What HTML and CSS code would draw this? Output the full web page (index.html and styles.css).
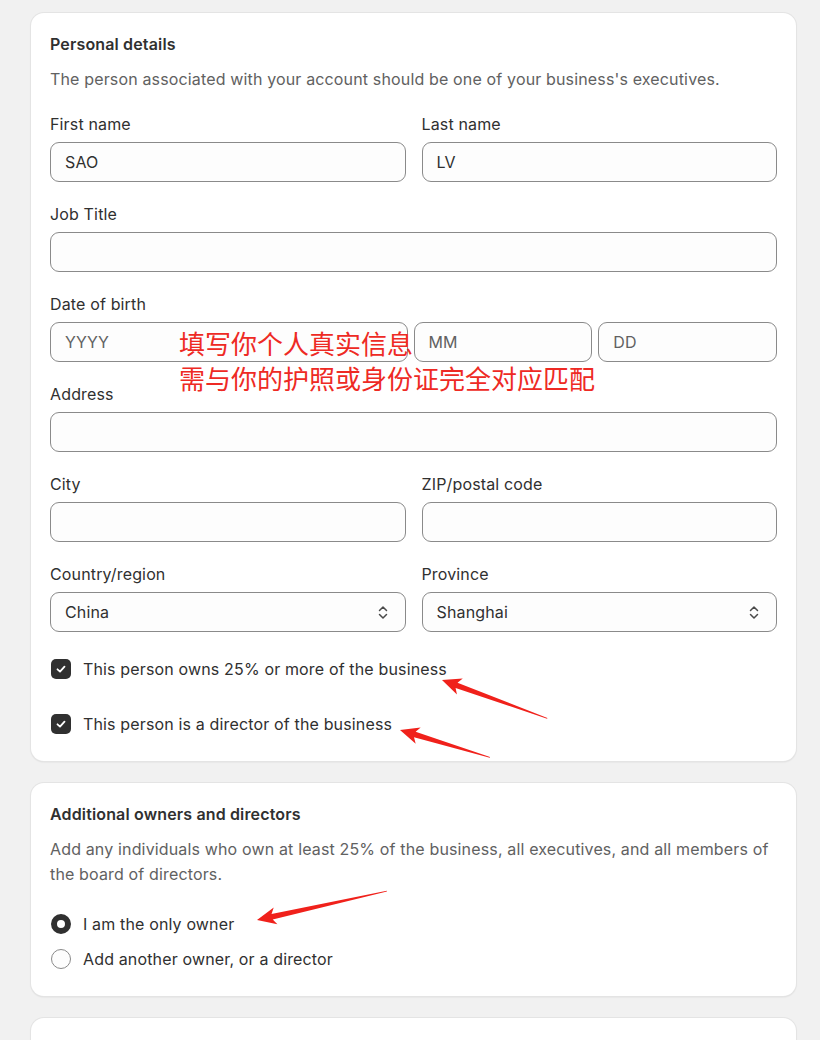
FILE: index.html
```html
<!DOCTYPE html>
<html lang="en">
<head>
<meta charset="utf-8">
<title>Personal details</title>
<link rel="stylesheet" href="styles.css">
</head>
<body>
<main class="page">
  <section class="card">
    <h2 class="card-title">Personal details</h2>
    <p class="card-desc">The person associated with your account should be one of your business's executives.</p>

    <div class="form">
      <div class="row two">
        <div class="field">
          <label class="label">First name</label>
          <div class="input">SAO</div>
        </div>
        <div class="field">
          <label class="label">Last name</label>
          <div class="input">LV</div>
        </div>
      </div>

      <div class="field">
        <label class="label">Job Title</label>
        <div class="input"></div>
      </div>

      <div class="field">
        <label class="label">Date of birth</label>
        <div class="dob">
          <div class="input placeholder">YYYY</div>
          <div class="input placeholder">MM</div>
          <div class="input placeholder">DD</div>
        </div>
      </div>

      <div class="field">
        <label class="label">Address</label>
        <div class="input"></div>
      </div>

      <div class="row two">
        <div class="field">
          <label class="label">City</label>
          <div class="input"></div>
        </div>
        <div class="field">
          <label class="label">ZIP/postal code</label>
          <div class="input"></div>
        </div>
      </div>

      <div class="row two">
        <div class="field">
          <label class="label">Country/region</label>
          <div class="input select"><span>China</span>
            <svg class="chev" width="10" height="15" viewBox="0 0 10 15"><path d="M1.5 5.5 L5 2 L8.5 5.5 M1.5 9.5 L5 13 L8.5 9.5" fill="none" stroke="#4a4a4a" stroke-width="1.5" stroke-linecap="round" stroke-linejoin="round"/></svg>
          </div>
        </div>
        <div class="field">
          <label class="label">Province</label>
          <div class="input select"><span>Shanghai</span>
            <svg class="chev" width="10" height="15" viewBox="0 0 10 15"><path d="M1.5 5.5 L5 2 L8.5 5.5 M1.5 9.5 L5 13 L8.5 9.5" fill="none" stroke="#4a4a4a" stroke-width="1.5" stroke-linecap="round" stroke-linejoin="round"/></svg>
          </div>
        </div>
      </div>
    </div>

    <div class="checks">
      <div class="check-row">
        <span class="checkbox"><svg width="12" height="12" viewBox="0 0 12 12"><path d="M2.5 6.3 L5 8.6 L9.5 3.6" fill="none" stroke="#fff" stroke-width="1.8" stroke-linecap="round" stroke-linejoin="round"/></svg></span>
        <span class="check-text">This person owns 25% or more of the business</span>
      </div>
      <div class="check-row">
        <span class="checkbox"><svg width="12" height="12" viewBox="0 0 12 12"><path d="M2.5 6.3 L5 8.6 L9.5 3.6" fill="none" stroke="#fff" stroke-width="1.8" stroke-linecap="round" stroke-linejoin="round"/></svg></span>
        <span class="check-text">This person is a director of the business</span>
      </div>
    </div>
  </section>

  <section class="card">
    <h2 class="card-title">Additional owners and directors</h2>
    <p class="card-desc">Add any individuals who own at least 25% of the business, all executives, and all members of the board of directors.</p>
    <div class="radios">
      <div class="radio-row"><span class="radio on"></span><span class="check-text">I am the only owner</span></div>
      <div class="radio-row"><span class="radio"></span><span class="check-text">Add another owner, or a director</span></div>
    </div>
  </section>

  <section class="card card-stub"></section>
</main>

<div class="annotation">
  <p>填写你个人真实信息</p>
  <p>需与你的护照或身份证完全对应匹配</p>
</div>

<svg class="arrows" width="820" height="1040" viewBox="0 0 820 1040">
  <g fill="#f0211b">
    <polygon transform="translate(442 680) rotate(20)" points="0,0 19,-8.5 15.5,-2.8 112,-0.4 112,0.4 15.5,2.8 19,8.5"/>
    <polygon transform="translate(400 730) rotate(17)" points="0,0 19,-8.5 15.5,-2.8 94,-0.4 94,0.4 15.5,2.8 19,8.5"/>
    <polygon transform="translate(257 920) rotate(-12.5)" points="0,0 19,-8.5 15.5,-2.8 133,-0.4 133,0.4 15.5,2.8 19,8.5"/>
  </g>
</svg>
</body>
</html>
```

FILE: styles.css
```css
* { box-sizing: border-box; }

html, body {
  margin: 0;
  padding: 0;
  background: #f1f1f1;
}

body {
  font-family: Inter, "Noto Sans", "Liberation Sans", sans-serif;
  color: #303030;
  font-size: 16px;
  letter-spacing: 0.15px;
  position: relative;
  height: 1040px;
  overflow: hidden;
}

.page {
  padding: 13px 0 0 31px;
  display: flex;
  flex-direction: column;
  gap: 22px;
}

.card {
  width: 765px;
  background: #fff;
  border-radius: 13px;
  padding: 20px 19px 27px;
  box-shadow: 0 0 0 1px #e4e4e4, 0 1px 2px rgba(0,0,0,0.12);
}

.card-stub {
  height: 60px;
}

.card-title {
  margin: 0;
  font-size: 16px;
  line-height: 22px;
  font-weight: 600;
  color: #303030;
}

.card-desc {
  margin: 12px 0 0;
  font-size: 16px;
  line-height: 25px;
  color: #616161;
}

.form {
  margin-top: 22px;
  display: flex;
  flex-direction: column;
  gap: 22px;
}

.row.two {
  display: grid;
  grid-template-columns: 1fr 1fr;
  gap: 16px;
}

.field {
  display: flex;
  flex-direction: column;
  gap: 8px;
}

.label {
  line-height: 20px;
  color: #303030;
}

.input {
  height: 40px;
  border: 1px solid #8a8a8a;
  border-radius: 9px;
  background: #fdfdfd;
  padding: 0 14px;
  display: flex;
  align-items: center;
  color: #303030;
}

.input.placeholder {
  color: #616161;
}

.dob {
  display: grid;
  grid-template-columns: 2fr 1fr 1fr;
  gap: 6px;
}

.select {
  justify-content: space-between;
  padding-right: 17px;
}

.chev { display: block; }

.checks {
  margin-top: 27px;
  display: flex;
  flex-direction: column;
  gap: 35px;
}

.check-row, .radio-row {
  display: flex;
  align-items: center;
  gap: 12px;
  height: 20px;
  padding-left: 1px;
}

.check-text {
  line-height: 20px;
  color: #303030;
}

.checkbox {
  width: 20px;
  height: 20px;
  border-radius: 5px;
  background: #303030;
  display: flex;
  align-items: center;
  justify-content: center;
}

.radios {
  margin-top: 27px;
  display: flex;
  flex-direction: column;
  gap: 15px;
}

.radio {
  width: 20px;
  height: 20px;
  border-radius: 50%;
  border: 1px solid #8a8a8a;
  background: #fdfdfd;
}

.radio.on {
  border: 6px solid #303030;
  background: #fff;
}

.annotation {
  position: absolute;
  left: 179px;
  top: 325px;
  color: #ee2a24;
  font-family: "Noto Sans CJK SC", "Noto Sans", sans-serif;
  font-size: 26px;
  line-height: 35px;
  font-weight: 400;
  letter-spacing: 0;
}

.annotation p { margin: 0; }

.arrows {
  position: absolute;
  left: 0;
  top: 0;
  pointer-events: none;
}
```
